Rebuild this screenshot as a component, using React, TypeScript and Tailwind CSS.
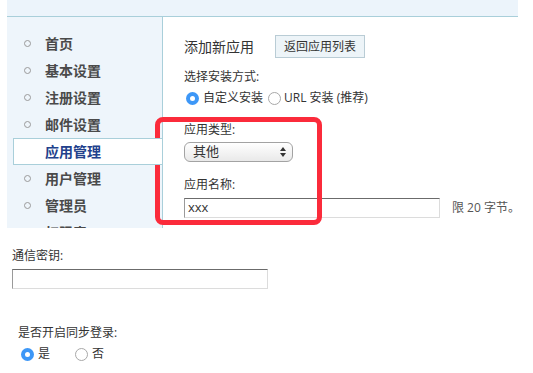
import React from "react";

const menu = ["首页", "基本设置", "注册设置", "邮件设置", "应用管理", "用户管理", "管理员", "权限表"];
const ACTIVE = "应用管理";

function Radio({ checked }: { checked?: boolean }) {
  return checked ? (
    <span className="flex h-[13px] w-[13px] shrink-0 items-center justify-center rounded-full bg-[#3d97f7]">
      <span className="h-[5px] w-[5px] rounded-full bg-white" />
    </span>
  ) : (
    <span className="block h-[13px] w-[13px] shrink-0 rounded-full border border-[#a8a8a8] bg-white" />
  );
}

function SelectArrows() {
  return (
    <svg width="6" height="10" viewBox="0 0 6 10" className="fill-[#333]">
      <path d="M3 0 L6 4 L0 4 Z" />
      <path d="M0 6 L6 6 L3 10 Z" />
    </svg>
  );
}

export default function App() {
  return (
    <div
      className="relative h-[373px] w-[533px] overflow-hidden bg-white text-[#333]"
      style={{ fontFamily: '"Open Sans", "Noto Sans CJK SC", sans-serif' }}
    >
      <div className="ml-[7px] h-[17px] w-[511px] border-b border-[#a9cfda] bg-[#ecf4fb]" />

      <div className="ml-[7px] flex">
        <div className="h-[211px] w-[156px] shrink-0 overflow-hidden border-r border-[#a9cfda] bg-[#eef5fb] pt-[13px]">
          {menu.map((item) =>
            item === ACTIVE ? (
              <div
                key={item}
                className="relative z-10 -mr-px ml-[6px] flex h-[27px] items-center border border-r-0 border-[#a9cfda] bg-white pl-[31px] text-[14px] font-bold text-[#22418c]"
              >
                {item}
              </div>
            ) : (
              <div key={item} className="flex h-[27px] items-center text-[14px] font-bold text-[#4a4a4a]">
                <span className="ml-[17px] h-[7px] w-[7px] rounded-full border border-[#9a9a9a]" />
                <span className="ml-[14px]">{item}</span>
              </div>
            )
          )}
        </div>

        <div className="flex-1 pl-[21px] pt-[18px]">
          <div className="flex h-[23px] items-center">
            <span className="text-[14px] text-[#333]">添加新应用</span>
            <button
              type="button"
              className="ml-[21px] h-[23px] border border-[#b9ccd5] bg-[#edf4f8] px-[8px] text-[12px] text-[#333]"
            >
              返回应用列表
            </button>
          </div>

          <div className="mt-[11px] h-[16px] text-[12px] leading-[16px]">选择安装方式:</div>
          <div className="mt-[5px] flex h-[16px] items-center text-[12px]">
            <span className="ml-[2px]"><Radio checked /></span>
            <span className="ml-[4px]">自定义安装</span>
            <span className="ml-[5px]"><Radio /></span>
            <span className="ml-[3px]">URL 安装 (推荐)</span>
          </div>

          <div className="mt-[16px] h-[16px] text-[12px] leading-[16px]">应用类型:</div>
          <div className="mt-[4px] flex h-[20px] w-[109px] items-center justify-between rounded-[6px] border border-[#a3a3a3] bg-gradient-to-b from-white to-[#e9e9e9] pl-[8px] pr-[6px] text-[13px]">
            <span>其他</span>
            <SelectArrows />
          </div>

          <div className="mt-[15px] h-[16px] text-[12px] leading-[16px]">应用名称:</div>
          <div className="mt-[5px] flex items-center">
            <div className="flex h-[20px] w-[256px] items-center border border-[#dcdcdc] border-t-[#6b6b6b] border-l-[#9a9a9a] pl-[3px] text-[13px]">
              xxx
            </div>
            <span className="ml-[12px] text-[12px] text-[#555]">限 20 字节。</span>
          </div>
        </div>
      </div>

      <div className="pl-[12px]">
        <div className="mt-[20px] h-[16px] text-[12px] leading-[16px]">通信密钥:</div>
        <div className="mt-[5px] h-[20px] w-[256px] border border-[#dcdcdc] border-t-[#6b6b6b] border-l-[#9a9a9a]" />

        <div className="ml-[6px] mt-[36px] h-[16px] text-[12px] leading-[16px]">是否开启同步登录:</div>
        <div className="ml-[9px] mt-[5px] flex h-[16px] items-center text-[12px]">
          <Radio checked />
          <span className="ml-[4px]">是</span>
          <span className="ml-[25px]"><Radio /></span>
          <span className="ml-[4px]">否</span>
        </div>
      </div>

      <div className="pointer-events-none absolute left-[155px] top-[117px] h-[108px] w-[167px] rounded-[8px] border-[5px] border-[#fb2b3b]" />
    </div>
  );
}
